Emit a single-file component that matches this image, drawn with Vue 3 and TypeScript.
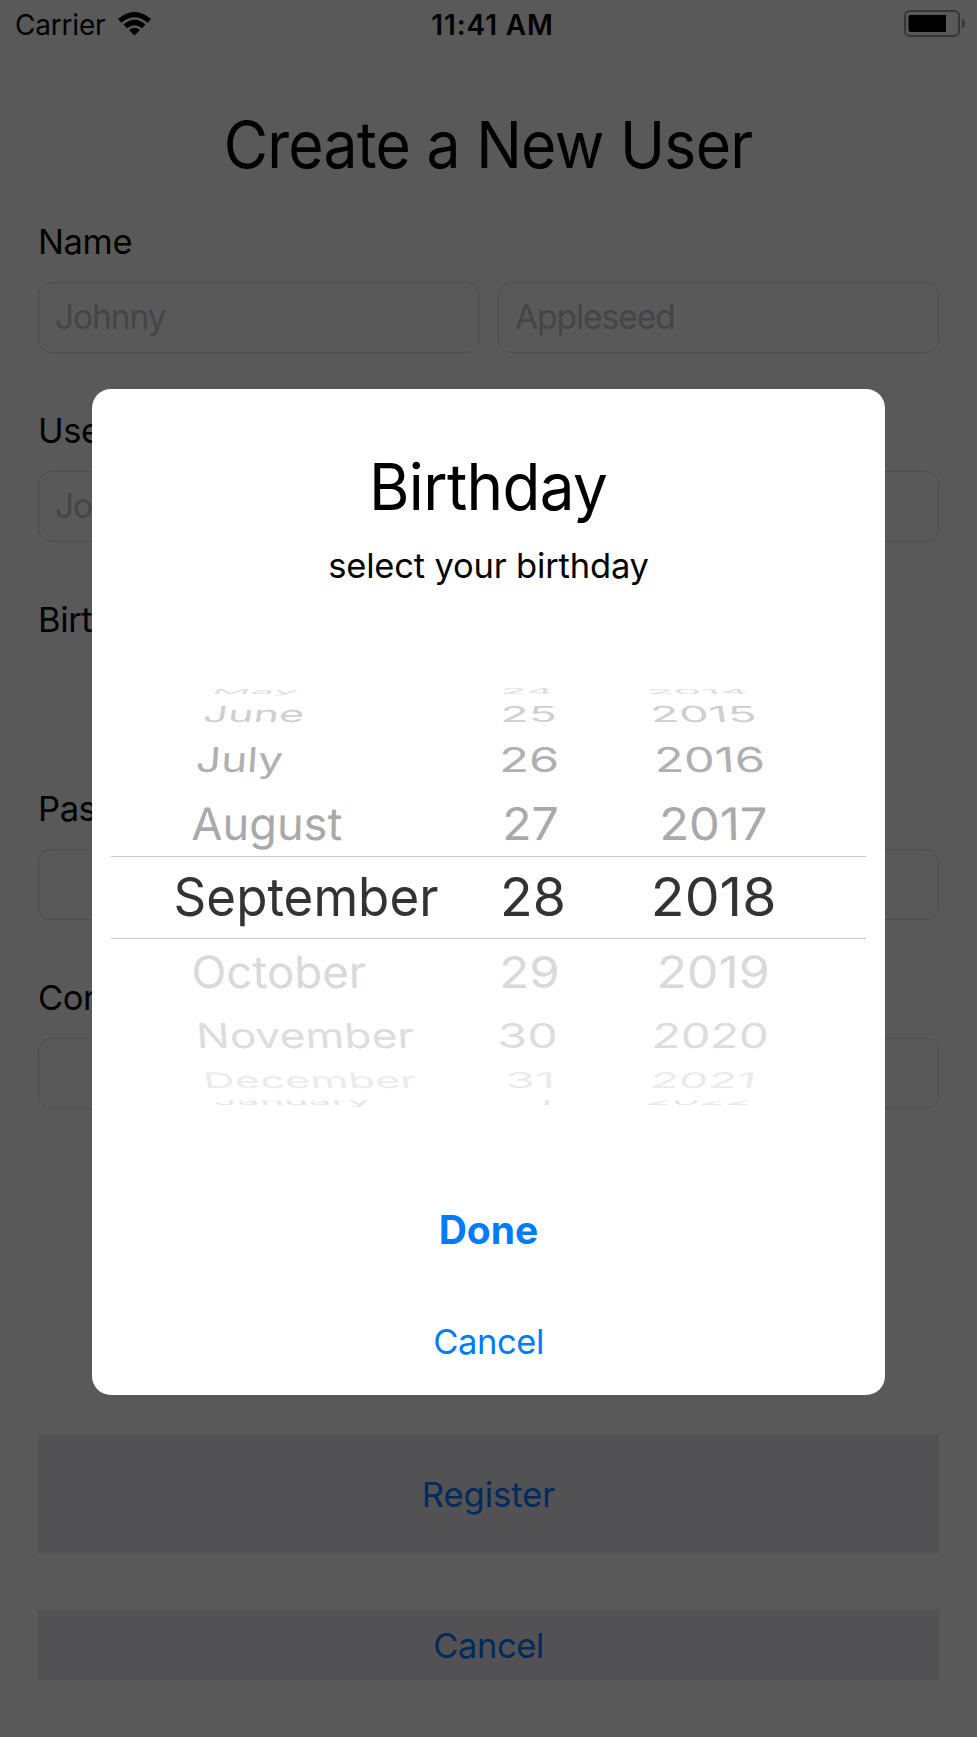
<script setup lang="ts">
interface WheelRow {
  baseline: number
  cap: number
  lean: number
  fill: string
  clip?: boolean
  cells: [string, number, number][]
}

const FONT_SIZE = 53
const CAP_HEIGHT = FONT_SIZE * 0.727

// Rows of the picker drum. Each cell holds its text, left edge and right edge.
const rows: WheelRow[] = [
  { baseline: 25, cap: 5, lean: 3, fill: '#dedede', cells: [['May', 122, 205.5], ['24', 411, 460], ['2014', 557, 656]] },
  { baseline: 53, cap: 16, lean: 2.5, fill: '#cfcfcf', cells: [['June', 112, 211], ['25', 411, 463], ['2015', 561, 663.5]] },
  { baseline: 103, cap: 25, lean: 1.6, fill: '#b0b0b0', cells: [['July', 105, 190.5], ['26', 410, 464.5], ['2016', 565, 671]] },
  { baseline: 170.7, cap: 32.5, lean: 0.6, fill: '#a9a9a9', cells: [['August', 100, 250], ['27', 413, 465], ['2017', 570, 674]] },
  { baseline: 247.2, cap: 38.5, lean: 0, fill: '#333333', cells: [['September', 84.5, 345.5], ['28', 411, 471], ['2018', 562, 681.5]] },
  { baseline: 318.7, cap: 32.3, lean: -0.6, fill: '#d9d9d9', cells: [['October', 102, 273.5], ['29', 410, 465], ['2019', 567, 675]] },
  { baseline: 379, cap: 25, lean: -1.6, fill: '#dddddd', cells: [['November', 107.5, 322], ['30', 408, 463.5], ['2020', 562, 674.5]] },
  { baseline: 419, cap: 15.5, lean: -2.5, fill: '#ebebeb', cells: [['December', 114.5, 325], ['31', 416, 459], ['2021', 560, 660]] },
  { baseline: 435.6, cap: 7, lean: -3, fill: '#e6e6e6', clip: true, cells: [['January', 122.5, 279], ['1', 444, 457], ['2022', 555, 658]] },
]

const ctx = document.createElement('canvas').getContext('2d')!
ctx.font = `400 ${FONT_SIZE}px Inter`

const cells = rows.flatMap((row) =>
  row.cells.map(([text, left, right], column) => {
    const m = ctx.measureText(text)
    const lean = column === 0 ? row.lean : column === 2 ? -row.lean : 0
    const inkWidth = m.actualBoundingBoxRight + m.actualBoundingBoxLeft
    const sx = (right - left - Math.abs(lean) * 0.5) / inkWidth
    const x = left + m.actualBoundingBoxLeft * sx + (lean < 0 ? -lean * 0.5 : 0)
    return {
      text,
      fill: row.fill,
      clip: row.clip ? 'url(#drum-edge)' : undefined,
      transform: `matrix(${sx} 0 ${-lean / CAP_HEIGHT} ${row.cap / CAP_HEIGHT} ${x} ${row.baseline})`,
    }
  }),
)

const groups = [
  { label: 'Name', fields: ['Johnny', 'Appleseed'] },
  { label: 'Username', fields: ['JohnnyAppleseed'] },
  { label: 'Birthday', fields: [] },
  { label: 'Password', fields: [''] },
  { label: 'Confirm Password', fields: [''] },
]
</script>

<template>
  <div class="screen">
    <header class="status">
      <div class="status-left">
        <span class="carrier">Carrier</span>
        <svg class="wifi" width="33" height="25" viewBox="0 0 33 25">
          <path d="M0 7.1 Q16.5 -7.2 33 7.1 L29.6 10.7 Q16.5 0 3.4 10.7 Z" />
          <path d="M5.5 12.5 Q16.5 3 27.5 12.5 L24 16.3 Q16.5 10.4 9 16.3 Z" />
          <path d="M11.1 18.1 Q16.5 13.3 21.9 18.1 L16.5 23.6 Z" />
        </svg>
      </div>
      <span class="time">11:41 AM</span>
      <svg class="battery" width="62" height="28" viewBox="0 0 62 28">
        <rect x="1" y="1" width="54" height="25" rx="5" fill="none" stroke="#999" stroke-width="2" />
        <path d="M6.5 5 H42 V22 H6.5 Q4.5 22 4.5 20 V7 Q4.5 5 6.5 5 Z" />
        <path d="M58 9 Q61 10.5 61 13.7 Q61 17 58 18.5 Z" fill="#999" />
      </svg>
    </header>

    <main class="form">
      <h1 class="title">Create a New User</h1>
      <section v-for="group in groups" :key="group.label" class="group">
        <div class="label">{{ group.label }}</div>
        <div class="fields">
          <div v-for="field in group.fields" :key="field" class="field">{{ field }}</div>
        </div>
      </section>
      <button class="action register">Register</button>
      <button class="action dismiss">Cancel</button>
    </main>

    <div class="overlay">
      <div class="dialog">
        <h2 class="dialog-title">Birthday</h2>
        <p class="dialog-text">select your birthday</p>
        <svg class="picker" width="793" height="440" viewBox="0 0 793 440">
          <clipPath id="drum-edge">
            <rect x="0" y="431.5" width="793" height="8" />
          </clipPath>
          <rect x="19" y="187" width="755" height="1" fill="#c8c8c8" />
          <rect x="19" y="269" width="755" height="1" fill="#c8c8c8" />
          <g v-for="(cell, i) in cells" :key="i" :clip-path="cell.clip">
            <text :transform="cell.transform" :fill="cell.fill" :font-size="FONT_SIZE">{{ cell.text }}</text>
          </g>
        </svg>
        <button class="done">Done</button>
        <button class="cancel">Cancel</button>
      </div>
    </div>
  </div>
</template>

<style>
body {
  margin: 0;
}
</style>

<style scoped>
.screen {
  position: relative;
  width: 977px;
  height: 1737px;
  overflow: hidden;
  background: #fff;
  color: #000;
  font-family: Inter, "Liberation Sans", sans-serif;
  font-size: 34.5px;
}

h1,
h2,
p {
  margin: 0;
  font-weight: 400;
}

button {
  display: block;
  padding: 0;
  border: 0;
  background: none;
  color: #007aff;
  font: inherit;
}

.status {
  display: grid;
  grid-template-columns: 1fr auto 1fr;
  height: 49px;
  padding: 0 9px 0 15px;
  font-size: 28px;
  line-height: 51px;
}

.status-left {
  display: flex;
}

.carrier {
  width: 103px;
  letter-spacing: -0.2px;
  white-space: nowrap;
}

.wifi {
  margin-top: 12px;
}

.time {
  padding-left: 2px;
  font-weight: 600;
  letter-spacing: 0.85px;
}

.battery {
  justify-self: end;
  margin: 10px 2px 0 0;
}

.form {
  padding: 0 38px;
}

.title {
  height: 171px;
  padding-right: 1px;
  font-size: 64.5px;
  line-height: 192px;
  letter-spacing: -0.75px;
  text-align: center;
  white-space: nowrap;
  transform: scaleX(0.94);
}

.group {
  height: 189px;
}

.label {
  height: 62px;
  line-height: 44px;
  letter-spacing: -0.4px;
}

.fields {
  display: flex;
  gap: 19px;
}

.field {
  box-sizing: border-box;
  flex: 1;
  height: 70.6px;
  padding-left: 16px;
  border: 1px solid #dcdcdc;
  border-radius: 13px;
  color: #c7c7cd;
  font-size: 33.5px;
  line-height: 68px;
  letter-spacing: -1.05px;
}

.action {
  width: 100%;
  background: #ebebf0;
}

.register {
  height: 118px;
  margin-top: 270px;
}

.dismiss {
  height: 70px;
  margin-top: 57px;
  letter-spacing: -0.4px;
}

.overlay {
  position: absolute;
  inset: 0;
  display: flex;
  flex-direction: column;
  align-items: center;
  background: rgba(0, 0, 0, 0.65);
}

.dialog {
  display: flex;
  flex-direction: column;
  align-items: center;
  width: 793px;
  height: 1006px;
  margin-top: 389.4px;
  border-radius: 19px;
  background: #fff;
}

.dialog-title {
  margin-top: 58px;
  padding-right: 1px;
  font-size: 64.5px;
  line-height: 80px;
  letter-spacing: -0.65px;
  transform: scaleX(0.96);
}

.dialog-text {
  margin-top: 17px;
  line-height: 44px;
  letter-spacing: -0.17px;
}

.picker {
  margin-top: 80.6px;
}

.done {
  margin-top: 93px;
  font-size: 39px;
  font-weight: 700;
  line-height: 56px;
}

.cancel {
  margin-top: 62px;
  line-height: 44px;
  letter-spacing: -0.4px;
}
</style>
